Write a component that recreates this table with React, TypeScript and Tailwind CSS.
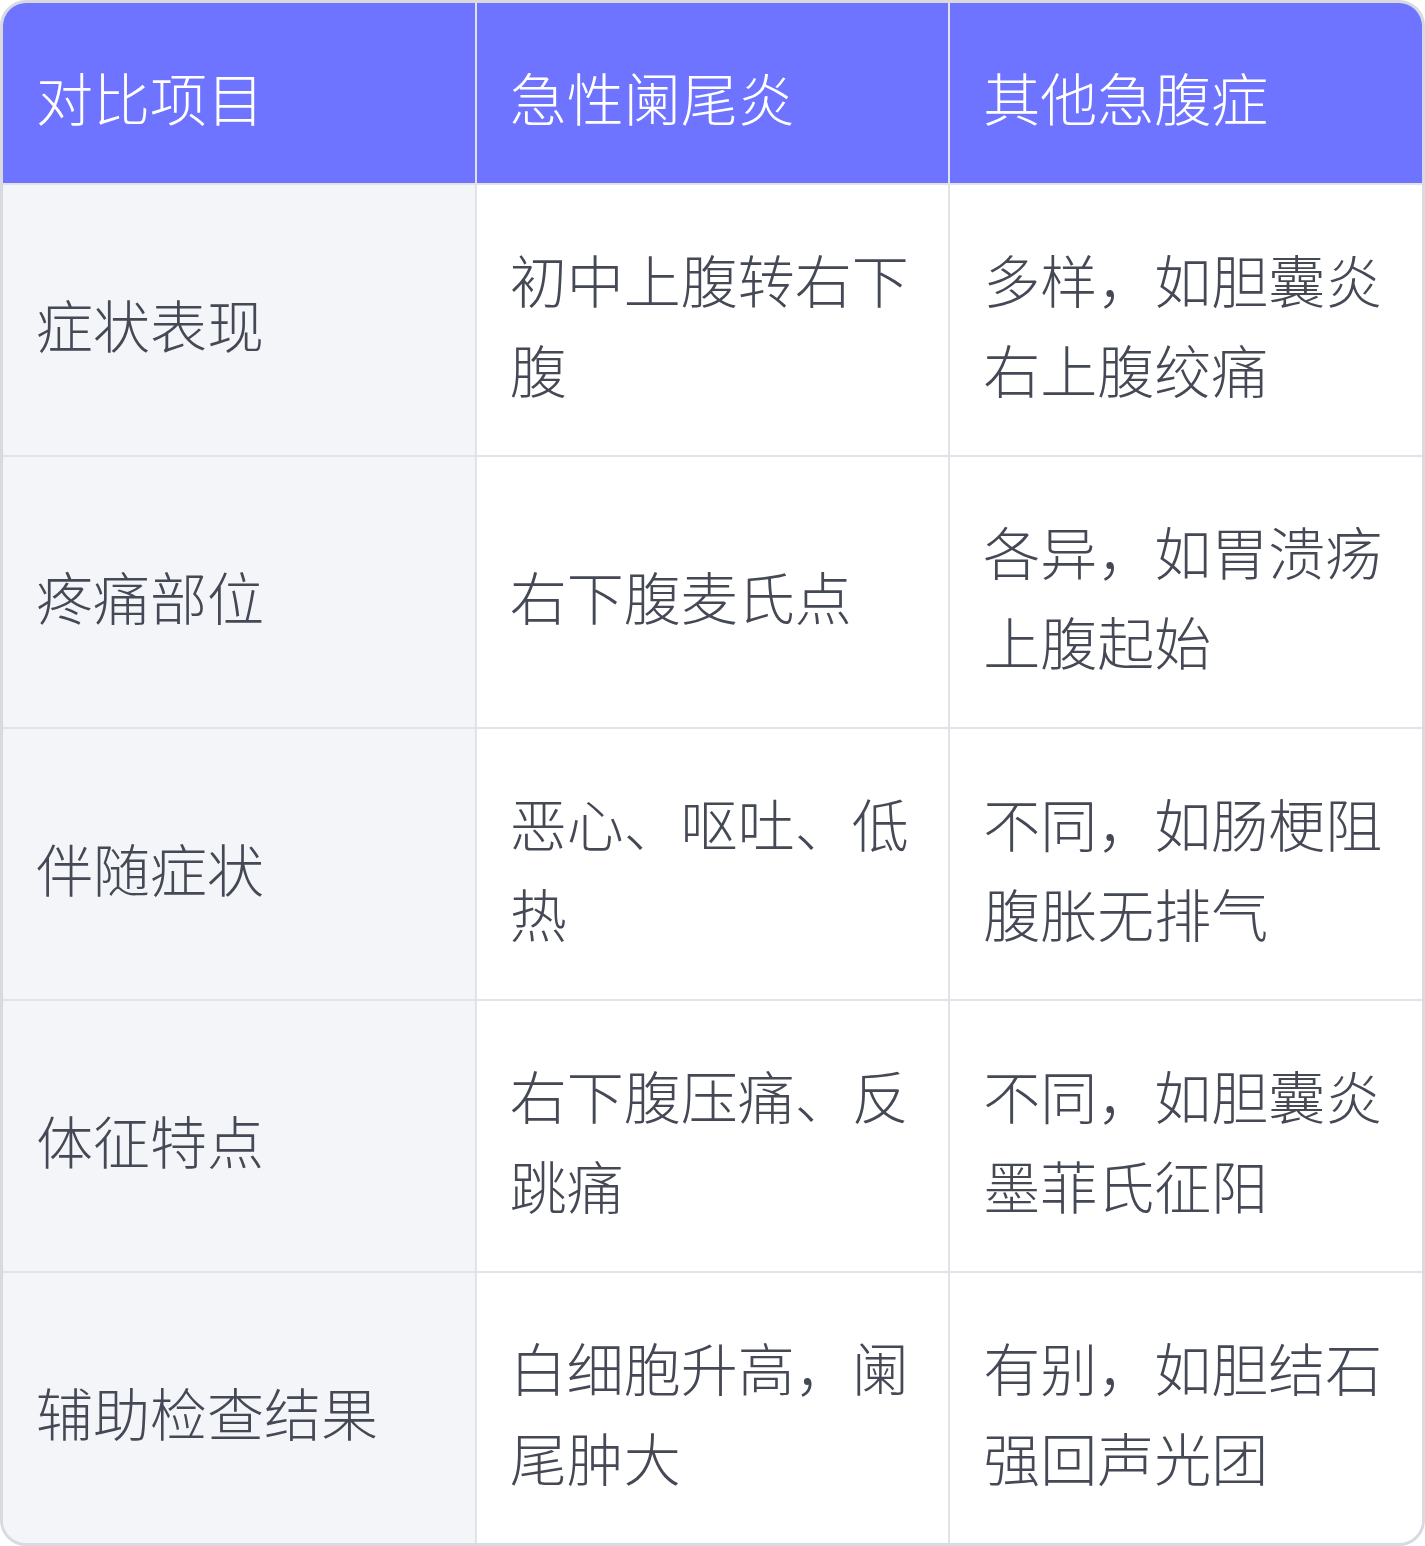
const rows: [string, string, string][] = [
  ["症状表现", "初中上腹转右下腹", "多样，如胆囊炎右上腹绞痛"],
  ["疼痛部位", "右下腹麦氏点", "各异，如胃溃疡上腹起始"],
  ["伴随症状", "恶心、呕吐、低热", "不同，如肠梗阻腹胀无排气"],
  ["体征特点", "右下腹压痛、反跳痛", "不同，如胆囊炎墨菲氏征阳"],
  ["辅助检查结果", "白细胞升高，阑尾肿大", "有别，如胆结石强回声光团"],
];

const headers = ["对比项目", "急性阑尾炎", "其他急腹症"];

export default function App() {
  return (
    <div
      className="w-[1425px] h-[1546px] bg-white"
      style={{ fontFamily: '"Noto Sans CJK SC", "Noto Sans", sans-serif' }}
    >
      <div className="h-full border-[3px] border-[#d8dadf] rounded-[26px] overflow-hidden">
        <div className="grid grid-cols-3 gap-[2px] bg-[#e1e3e8] h-full grid-rows-[180px_repeat(5,270px)]">
          {headers.map((h) => (
            <div
              key={h}
              className="bg-[#6e74ff] text-white text-[57px] font-light leading-[90px] pl-[33px] pr-[30px] pt-[5px] flex items-center"
            >
              {h}
            </div>
          ))}
          {rows.map((r) =>
            r.map((cell, i) => (
              <div
                key={r[0] + i}
                className={`${
                  i === 0 ? "bg-[#f4f5f9]" : "bg-white"
                } text-[#454955] text-[57px] font-light leading-[90px] pl-[33px] pr-[30px] pt-[5px] flex items-center`}
              >
                <span>{cell}</span>
              </div>
            ))
          )}
        </div>
      </div>
    </div>
  );
}
